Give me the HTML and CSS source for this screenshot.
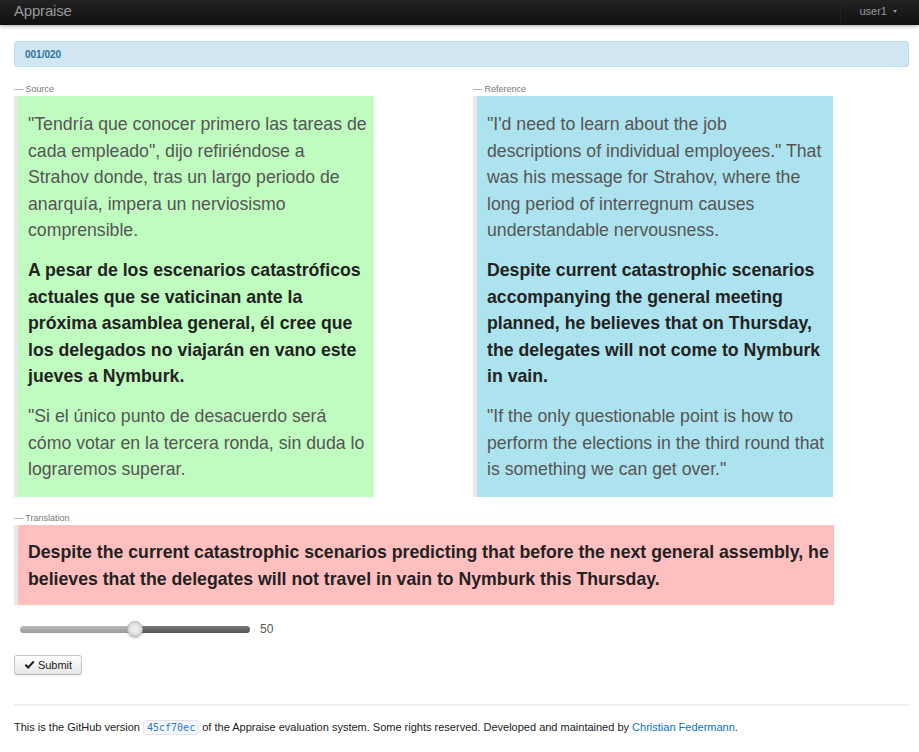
FILE: index.html
```html
<!DOCTYPE html>
<html>
<head>
<meta charset="utf-8">
<link rel="stylesheet" href="styles.css">
</head>
<body>
<div class="navbar">
  <span class="brand">Appraise</span>
  <div class="nav-user"><span>user1</span><span class="caret"></span></div>
</div>
<div class="page">
  <div class="alert">001/020</div>
  <div class="cols">
    <div class="col">
      <div class="label">— Source</div>
      <div class="block green">
        <p>"Tendría que conocer primero las tareas de cada empleado", dijo refiriéndose a Strahov donde, tras un largo periodo de anarquía, impera un nerviosismo comprensible.</p>
        <p class="strong">A pesar de los escenarios catastróficos actuales que se vaticinan ante la próxima asamblea general, él cree que los delegados no viajarán en vano este jueves a Nymburk.</p>
        <p>"Si el único punto de desacuerdo será cómo votar en la tercera ronda, sin duda lo lograremos superar.</p>
      </div>
    </div>
    <div class="col">
      <div class="label">— Reference</div>
      <div class="block blue">
        <p>"I'd need to learn about the job descriptions of individual employees." That was his message for Strahov, where the long period of interregnum causes understandable nervousness.</p>
        <p class="strong">Despite current catastrophic scenarios accompanying the general meeting planned, he believes that on Thursday, the delegates will not come to Nymburk in vain.</p>
        <p>"If the only questionable point is how to perform the elections in the third round that is something we can get over."</p>
      </div>
    </div>
  </div>
  <div class="label">— Translation</div>
  <div class="block pink wide">
    <p class="strong">Despite the current catastrophic scenarios predicting that before the next general assembly, he believes that the delegates will not travel in vain to Nymburk this Thursday.</p>
  </div>
  <div class="slider-row">
    <div class="slider">
      <div class="track-left"></div>
      <div class="track-right"></div>
      <div class="handle"></div>
    </div>
    <span class="value">50</span>
  </div>
  <button class="btn"><svg class="check" width="11" height="10" viewBox="0 0 11 10"><path d="M0.6 5.4 L2.2 3.9 L4.2 5.9 L9 0.8 L10.5 2.3 L4.2 8.9 Z" fill="#222"/></svg>Submit</button>
  <hr class="rule">
  <footer class="footer">This is the GitHub version <code class="code">45cf70ec</code> of the Appraise evaluation system. Some rights reserved. Developed and maintained by <a class="link" href="#">Christian Federmann</a>.</footer>
</div>
</body>
</html>
```
FILE: styles.css
```css
* { box-sizing: border-box; }
html, body { margin: 0; padding: 0; background: #fff; }
body { font-family: "Liberation Sans", Arial, sans-serif; color: #333; }

.navbar {
  height: 25px;
  background: linear-gradient(#222, #111);
  box-shadow: 0 1px 4px rgba(0,0,0,0.35);
  display: flex;
  align-items: center;
  justify-content: space-between;
  padding-left: 14px;
}
.brand { color: #999; font-size: 15px; font-weight: 300; letter-spacing: -0.2px; margin-top: -4px; }
.nav-user {
  height: 25px;
  border-left: 1px solid #222;
  padding: 0 22px 0 18px;
  display: flex;
  align-items: center;
  gap: 6px;
  color: #999;
  font-size: 11px;
  margin-top: -4px;
}
.caret {
  width: 0; height: 0;
  border-left: 2.5px solid transparent;
  border-right: 2.5px solid transparent;
  border-top: 3px solid #999;
  margin-top: 1px;
}

.page { padding: 16px 10px 0 14px; }

.alert {
  height: 26px;
  background: #d0e7f3;
  border: 1px solid #b7dfee;
  border-radius: 3px;
  color: #2d6f9c;
  font-weight: bold;
  font-size: 10px;
  padding: 0 10px;
  display: flex;
  align-items: center;
}

.cols { display: grid; grid-template-columns: 459px 1fr; margin-top: 16px; }
.label { font-size: 9px; color: #777; height: 13px; line-height: 13px; }

.block {
  width: 360px;
  border-left: 4px solid #e8e8e8;
  padding: 15px 7px 0 10px;
  font-size: 17.7px;
  line-height: 26.5px;
  color: #555;
}
.block p { margin: 0 0 13.5px; }
.block .strong { font-weight: bold; color: #222; }
.green { background: #c0fcc0; height: 401px; }
.blue { background: #ade3ee; height: 401px; }
.pink { background: #ffbfbf; }
.wide { width: 820px; padding-right: 4px; padding-top: 14px; height: 80px; }
.cols + .label { margin-top: 15px; }

.slider-row { display: flex; align-items: center; padding-left: 6px; margin-top: 17px; height: 14px; }
.slider { position: relative; width: 230px; height: 14px; display: flex; align-items: center; }
.track-left { width: 115px; height: 7px; border-radius: 4px 0 0 4px; background: linear-gradient(#bbb, #999); }
.track-right { flex: 1; height: 7px; border-radius: 0 4px 4px 0; background: linear-gradient(#777, #555); }
.handle {
  position: absolute; left: 107px; top: -1px;
  width: 16px; height: 16px; border-radius: 50%;
  background: radial-gradient(circle, #eee 25%, #d2d2d2 75%);
  border: 1px solid #bbb;
  box-shadow: 0 1px 2px rgba(0,0,0,0.25);
}
.value { margin-left: 10px; font-size: 12px; color: #555; }

.btn {
  margin-top: 19px;
  height: 20px;
  width: 68px;
  padding: 0;
  display: flex;
  align-items: center;
  justify-content: center;
  gap: 3px;
  font-family: "Liberation Sans", Arial, sans-serif;
  font-size: 11px;
  color: #222;
  background: linear-gradient(#fff, #e6e6e6);
  border: 1px solid #c8c8c8;
  border-bottom-color: #b3b3b3;
  border-radius: 3px;
  box-shadow: 0 1px 2px rgba(0,0,0,0.05);
}
.check { display: block; margin-top: -1px; }

.rule { margin: 29px 0 0; border: 0; border-top: 2px solid #eee; }
.footer { margin-top: 14px; font-size: 11px; color: #222; line-height: 14px; }
.code {
  font-family: "DejaVu Sans Mono", monospace;
  font-size: 10px;
  color: #2a7ad2;
  background: #f5f7fa;
  border: 1px solid #e1e4e8;
  border-radius: 3px;
  padding: 1px 3px;
}
.link { color: #0a6fcb; text-decoration: none; }
```
